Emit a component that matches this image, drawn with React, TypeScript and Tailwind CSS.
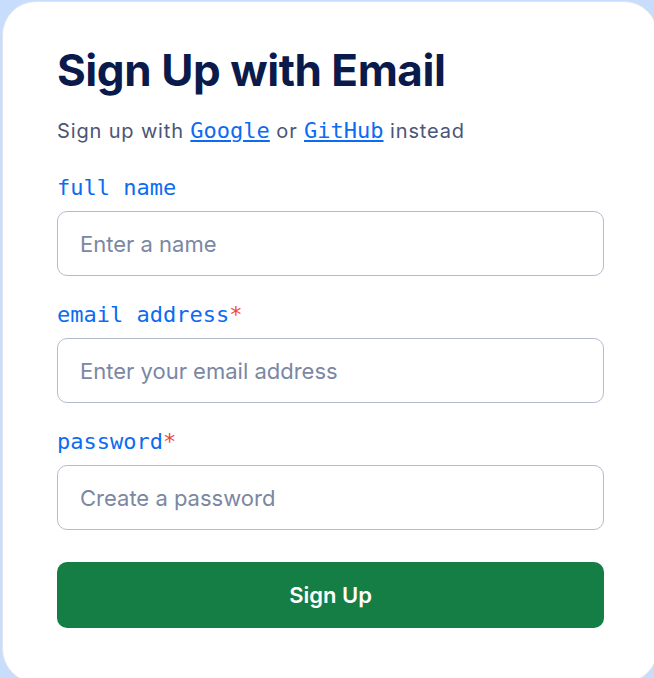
import React from 'react';

const mono = { fontFamily: '"DejaVu Sans Mono", "Liberation Mono", monospace' };

const Field: React.FC<{ label: string; placeholder: string; required?: boolean; type?: string }> = ({
  label,
  placeholder,
  required,
  type = 'text',
}) => (
  <div className="flex flex-col gap-[10px]">
    <label className="text-[22px] leading-[26px] text-[#0b6bf2]" style={mono}>
      {label}
      {required && <span className="text-[#f0443a]">*</span>}
    </label>
    <input
      type={type}
      placeholder={placeholder}
      className="h-[65px] w-full rounded-[10px] border border-[#b4bcd0] bg-white px-[22px] text-[22px] text-[#0a1a4a] outline-none placeholder:text-[#7b87a3]"
    />
  </div>
);

export default function App() {
  return (
    <div
      className="h-[678px] w-[654px] overflow-hidden bg-[#c8dcfc] pl-[2px] pt-[1px]"
      style={{ fontFamily: 'Inter, "Noto Sans", sans-serif' }}
    >
      <div className="h-[682px] w-[656px] rounded-[34px] border border-[#dfe5ef] bg-white pl-[54px] pr-[50px] pt-[42px]">
        <h1 className="text-[44px] font-bold leading-[52px] tracking-[-0.01em] text-[#0a1a4a]">Sign Up with Email</h1>
        <p className="mt-[22px] text-[20px] leading-[26px] tracking-[0.85px] text-[#4b5576]">
          Sign up with{' '}
          <a href="#" className="text-[22px] tracking-normal text-[#0b6bf2] underline underline-offset-2" style={mono}>
            Google
          </a>{' '}
          or{' '}
          <a href="#" className="text-[22px] tracking-normal text-[#0b6bf2] underline underline-offset-2" style={mono}>
            GitHub
          </a>{' '}
          instead
        </p>
        <form className="mt-[31px] flex w-[547px] flex-col gap-[26px]" onSubmit={(e) => e.preventDefault()}>
          <Field label="full name" placeholder="Enter a name" />
          <Field label="email address" placeholder="Enter your email address" required type="email" />
          <Field label="password" placeholder="Create a password" required type="password" />
          <button
            type="submit"
            className="mt-[6px] h-[66px] w-full rounded-[10px] bg-[#157e45] text-[22px] font-semibold text-white"
          >
            Sign Up
          </button>
        </form>
      </div>
    </div>
  );
}
